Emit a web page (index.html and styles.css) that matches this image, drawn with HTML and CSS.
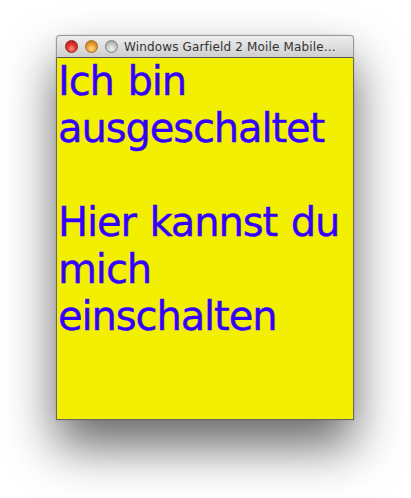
FILE: index.html
```html
<!DOCTYPE html>
<html lang="de">
<head>
<meta charset="utf-8">
<title>Windows Garfield 2 Moile Mabile</title>
<link rel="stylesheet" href="styles.css">
</head>
<body>
<div class="window">
  <div class="titlebar">
    <div class="lights">
      <span class="light close"></span>
      <span class="light min"></span>
      <span class="light zoom"></span>
    </div>
    <div class="title">Windows Garfield 2 Moile Mabile…</div>
  </div>
  <div class="content">
    <p class="msg">Ich bin ausgeschaltet</p>
    <p class="msg">Hier kannst du mich einschalten</p>
  </div>
</div>
</body>
</html>
```

FILE: styles.css
```css
html, body {
  margin: 0;
  padding: 0;
  background: #ffffff;
}
body {
  padding-top: 35px;
  height: 463px;
  overflow: hidden;
}
.window {
  margin-left: 56px;
  width: 298px;
  border-radius: 4px 4px 0 0;
  box-shadow: 0 26px 50px rgba(0, 0, 0, 0.6), 0 0 1px rgba(0,0,0,0.5);
}
.titlebar {
  height: 21px;
  display: flex;
  align-items: center;
  gap: 6px;
  padding: 0 6px 0 8px;
  background: linear-gradient(#ededed, #cfcfcf);
  border: 1px solid #9a9a9a;
  border-bottom-color: #555;
  border-radius: 4px 4px 0 0;
  box-sizing: content-box;
}
.lights {
  display: flex;
  gap: 7px;
}
.light {
  width: 13px;
  height: 13px;
  border-radius: 50%;
  box-sizing: border-box;
}
.close {
  background: radial-gradient(circle at 50% 70%, #ff8f86 0%, #e0362c 45%, #9c1810 100%);
  border: 1px solid #8e241c;
}
.min {
  background: radial-gradient(circle at 50% 70%, #ffe08f 0%, #eca232 45%, #b06c12 100%);
  border: 1px solid #a06e22;
}
.zoom {
  background: radial-gradient(circle at 50% 70%, #f4f4f4 0%, #c4c4c4 50%, #949494 100%);
  border: 1px solid #848484;
}
.title {
  font-family: "DejaVu Sans", sans-serif;
  font-size: 12px;
  color: #333333;
  white-space: nowrap;
  letter-spacing: 0.15px;
}
.content {
  height: 361px;
  background: #f2f000;
  border: 1px solid #666;
  border-top: none;
  padding: 0 0 0 1px;
  overflow: hidden;
}
.msg {
  margin: 0 0 47px 0;
  font-family: "DejaVu Sans", sans-serif;
  font-size: 40px;
  line-height: 47px;
  letter-spacing: -1.1px;
  word-spacing: 2px;
  color: #3300ff;
  -webkit-text-stroke: 0.4px #3300ff;
}
```
